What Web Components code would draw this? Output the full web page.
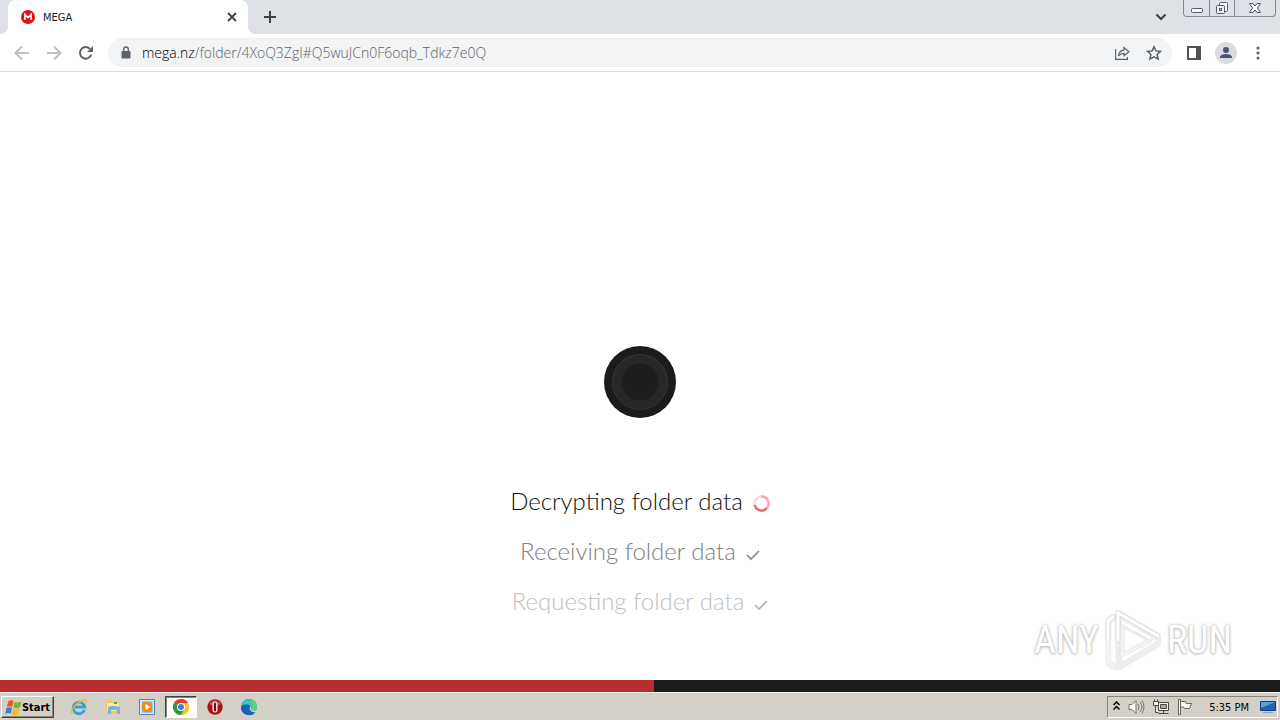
<!DOCTYPE html>
<html lang="en">
<head>
<meta charset="utf-8">
<title>MEGA</title>
<style>
  body {
    margin: 0;
    background: #fff;
    font-family: "DejaVu Sans Condensed", "DejaVu Sans", sans-serif;
    font-size: 11px;
    color: #000;
  }
</style>
</head>
<body>
<desktop-screen>
  <tab-strip slot="window">
    <browser-tab label="MEGA"></browser-tab>
  </tab-strip>
  <browser-toolbar slot="window" host="mega.nz" path="/folder/4XoQ3ZgI#Q5wuJCn0F6oqb_Tdkz7e0Q"></browser-toolbar>
  <mega-loader slot="page" progress="51.1">
    <loading-step state="busy">Decrypting folder data</loading-step>
    <loading-step state="done">Receiving folder data</loading-step>
    <loading-step state="old">Requesting folder data</loading-step>
  </mega-loader>
  <run-watermark slot="page"></run-watermark>
  <task-bar slot="taskbar" time="5:35 PM"></task-bar>
</desktop-screen>

<script>
/**
 * Base class: clones the markup of the subclass into an open shadow root
 */
class BaseElement extends HTMLElement {
  constructor() {
    super();
    const template = document.createElement("template");
    template.innerHTML = `
      <style>
        :host, * { box-sizing: border-box; }
        button {
          background: none;
          border: 0;
          margin: 0;
          padding: 0;
          color: inherit;
          font: inherit;
          display: flex;
          align-items: center;
          justify-content: center;
          flex: none;
        }
        svg { display: block; flex: none; }
      </style>
      ${this.constructor.markup}`;
    this.attachShadow({ mode: "open" }).appendChild(
      template.content.cloneNode(true)
    );
  }

  $(selector) {
    return this.shadowRoot.querySelector(selector);
  }
}

class DesktopScreen extends BaseElement {
  static markup = `
    <style>
      :host { display: flex; flex-direction: column; min-height: 100vh; }
      .page { position: relative; flex: 1; display: flex; flex-direction: column; }
    </style>
    <slot name="window"></slot>
    <div class="page"><slot name="page"></slot></div>
    <slot name="taskbar"></slot>`;
}

class TabStrip extends BaseElement {
  static markup = `
    <style>
      :host {
        display: flex;
        height: 34px;
        padding-left: 8px;
        background: #dee1e6;
        color: #3c4043;
      }
      .new { width: 28px; height: 34px; margin-left: 8px; }
      .search { width: 28px; height: 34px; margin-left: auto; margin-right: 8px; }
      .frame {
        display: flex;
        height: 17px;
        margin-right: 4px;
        border: 1px solid #84878f;
        border-top: 0;
        border-radius: 0 0 4px 4px;
      }
      .frame button { width: 25px; }
      .frame button + button { border-left: 1px solid #84878f; }
      .frame button:last-child { width: 41px; }
    </style>
    <slot></slot>
    <button class="new" aria-label="New tab">
      <svg width="14" height="14" viewBox="0 0 14 14" stroke="currentColor" stroke-width="2"><path d="M7 1v12M1 7h12"/></svg>
    </button>
    <button class="search" aria-label="Search tabs">
      <svg width="12" height="8" viewBox="0 0 12 8" fill="none" stroke="currentColor" stroke-width="2"><path d="M1.500 1.500L6 6l4.500-4.500"/></svg>
    </button>
    <div class="frame">
      <button aria-label="Minimize">
        <svg width="14" height="16" viewBox="0 0 14 16" fill="#f4f5f7" stroke="#555a66"><rect x="1.500" y="8.500" width="11" height="4" rx="1"/></svg>
      </button>
      <button aria-label="Restore">
        <svg width="14" height="16" viewBox="0 0 14 16" fill="#f4f5f7" stroke="#555a66"><rect x="4.500" y="2.500" width="8" height="9" rx="1"/><rect x="1.500" y="5.500" width="8" height="8" rx="1"/><rect x="4.500" y="8.500" width="2" height="2"/></svg>
      </button>
      <button aria-label="Close">
        <svg width="14" height="16" viewBox="0 0 14 16" fill="#f4f5f7" stroke="#555a66"><path d="M1.500 3.500h3.500l2 2.500 2-2.500h3.500L9.500 8l3 4.500H9L7 10l-2 2.500H1.500L4.500 8z"/></svg>
      </button>
    </div>`;
}

class BrowserTab extends BaseElement {
  static markup = `
    <style>
      :host {
        position: relative;
        display: flex;
        align-items: center;
        width: 240px;
        padding: 0 10px 0 13px;
        background: #fff;
        border-radius: 8px 8px 0 0;
        color: #202124;
      }
      /* Feet that flare the tab into the toolbar */
      :host::before, :host::after {
        content: "";
        position: absolute;
        bottom: 0;
        width: 8px;
        height: 8px;
      }
      :host::before { right: 100%; background: radial-gradient(circle at 0 0, transparent 8px, #fff 8px); }
      :host::after { left: 100%; background: radial-gradient(circle at 100% 0, transparent 8px, #fff 8px); }
      .label { flex: 1; margin-left: 8px; }
      button { width: 12px; height: 12px; }
    </style>
    <svg width="14" height="14" viewBox="0 0 14 14"><circle cx="7" cy="7" r="7" fill="#e3101c"/><path d="M3.900 9.800V4.500L7 7.600l3.100-3.100v5.300" fill="none" stroke="#fff" stroke-width="1.700"/></svg>
    <span class="label"></span>
    <button aria-label="Close tab">
      <svg width="10" height="10" viewBox="0 0 10 10" stroke="#3c4043" stroke-width="1.800"><path d="M1 1l8 8M9 1L1 9"/></svg>
    </button>`;

  connectedCallback() {
    this.$(".label").textContent = this.getAttribute("label");
  }
}

class BrowserToolbar extends BaseElement {
  static markup = `
    <style>
      :host {
        display: flex;
        align-items: center;
        height: 38px;
        padding: 0 6px;
        border-bottom: 1px solid #dadce0;
        background: #fff;
        color: #5f6368;
      }
      button { width: 32px; height: 32px; }
      button:disabled { color: #bdc1c6; }
      .omnibox {
        flex: 1;
        display: flex;
        align-items: center;
        height: 29px;
        margin: 0 6px;
        padding-left: 12px;
        padding-right: 2px;
        border-radius: 15px;
        background: #f1f3f4;
      }
      .url {
        flex: 1;
        margin-left: 10px;
        font: 300 14px/20px "Open Sans", sans-serif;
        color: #5f6368;
        outline: none;
        white-space: nowrap;
      }
      .host { color: #000; }
      .avatar svg { border-radius: 50%; background: #dadce0; }
    </style>
    <button disabled aria-label="Back">
      <svg width="16" height="16" viewBox="0 0 16 16" fill="none" stroke="currentColor" stroke-width="2"><path d="M15 8H2M8 1.500L1.500 8 8 14.500"/></svg>
    </button>
    <button disabled aria-label="Forward">
      <svg width="16" height="16" viewBox="0 0 16 16" fill="none" stroke="currentColor" stroke-width="2"><path d="M1 8h13M8 1.500L14.500 8 8 14.500"/></svg>
    </button>
    <button aria-label="Reload">
      <svg width="16" height="16" viewBox="0 0 16 16"><path d="M13.300 9.500A5.800 5.800 0 1 1 12.300 4.200" fill="none" stroke="currentColor" stroke-width="2"/><path d="M15 1v6H9z" fill="currentColor"/></svg>
    </button>
    <div class="omnibox">
      <svg width="12" height="14" viewBox="0 0 12 14"><rect x="1.500" y="5" width="9" height="7.500" rx="1" fill="currentColor"/><path d="M3.700 5.500V3.300a2.300 2.300 0 0 1 4.600 0v2.200" fill="none" stroke="currentColor" stroke-width="1.400"/></svg>
      <div class="url" role="textbox" contenteditable="true" spellcheck="false" aria-label="Address and search bar"><span class="host"></span><span class="path"></span></div>
      <button aria-label="Share this page">
        <svg width="16" height="16" viewBox="0 0 16 16" fill="none" stroke="currentColor" stroke-width="1.200"><path d="M1.600 4v10.400h11.800V12"/><path d="M4.500 11c.3-3.800 2.300-5.600 5.500-5.800V2.600l4.900 4.200L10 10.800V8.300C7.500 8.300 5.800 9 4.500 11z"/></svg>
      </button>
      <button aria-label="Bookmark this tab">
        <svg width="16" height="16" viewBox="0 0 16 16" fill="none" stroke="currentColor" stroke-width="1.500"><path d="M8 1.700l1.900 4.200 4.600.5-3.400 3.100 1 4.600L8 11.800l-4.100 2.300 1-4.600L1.500 6.400l4.600-.5z"/></svg>
      </button>
    </div>
    <button aria-label="Side panel">
      <svg width="14" height="14" viewBox="0 0 14 14"><path d="M1 1h12v12H1z" fill="none" stroke="#4f5358" stroke-width="2"/><path d="M9 1h5v12H9z" fill="#4f5358"/></svg>
    </button>
    <button class="avatar" aria-label="You">
      <svg width="22" height="22" viewBox="0 0 22 22" fill="#4a5777"><circle cx="11" cy="8" r="3"/><path d="M5 16v-1c0-2 3.500-3 6-3s6 1 6 3v1z"/></svg>
    </button>
    <button aria-label="Customize and control">
      <svg width="4" height="16" viewBox="0 0 4 16" fill="currentColor"><circle cx="2" cy="3" r="1.600"/><circle cx="2" cy="8" r="1.600"/><circle cx="2" cy="13" r="1.600"/></svg>
    </button>`;

  connectedCallback() {
    this.$(".host").textContent = this.getAttribute("host");
    this.$(".path").textContent = this.getAttribute("path");
  }
}

class MegaLoader extends BaseElement {
  static markup = `
    <style>
      :host {
        flex: 1;
        display: flex;
        flex-direction: column;
        align-items: center;
        justify-content: flex-end;
      }
      .disc {
        display: flex;
        padding: 8px;
        margin-bottom: 58px;
        border-radius: 50%;
        background: #1b1b1b;
      }
      .ring {
        width: 56px;
        height: 56px;
        border: 1px solid #353535;
        border-radius: 50%;
        background: radial-gradient(circle, #1d1d1d 18px, #272727 19px);
      }
      .steps { margin-bottom: 54px; }
      progress {
        appearance: none;
        display: block;
        width: 100%;
        height: 12px;
        border: 0;
      }
      progress::-webkit-progress-bar { background: #1c1c1c; }
      progress::-webkit-progress-value { background: #b92c30; }
    </style>
    <div class="disc"><div class="ring"></div></div>
    <div class="steps"><slot></slot></div>
    <progress max="100" aria-label="Loading"></progress>`;

  connectedCallback() {
    this.$("progress").value = Number(this.getAttribute("progress"));
  }
}

class LoadingStep extends BaseElement {
  static markup = `
    <style>
      :host {
        display: flex;
        align-items: center;
        justify-content: center;
        gap: 10px;
        height: 50px;
        font: 300 24px/30px Lato, sans-serif;
        color: #111;
      }
      :host([state="done"]) { color: #808080; }
      :host([state="old"]) { color: #c0c0c0; }
      svg { display: none; margin-top: 5px; }
      :host([state="busy"]) .spinner { display: block; }
      :host([state="done"]) .check { display: block; color: #888; }
      :host([state="old"]) .check { display: block; color: #b4b4b4; }
    </style>
    <slot></slot>
    <svg class="spinner" width="17" height="17" viewBox="0 0 17 17" fill="none" stroke-width="2.500">
      <circle cx="8.500" cy="8.500" r="7" stroke="#fbdcde"/>
      <path d="M8.500 1.500a7 7 0 0 1 5 12" stroke="#f6a9af"/>
      <path d="M13.500 13.500A7 7 0 0 1 1.700 10" stroke="#ee6b76"/>
    </svg>
    <svg class="check" width="14" height="14" viewBox="0 0 14 14" fill="none" stroke="currentColor" stroke-width="1.700"><path d="M1 8l4 4 8-8"/></svg>`;
}

class RunWatermark extends BaseElement {
  static markup = `
    <style>
      /* Floats over the page, anchored to its bottom right corner */
      :host {
        position: absolute;
        right: 48px;
        bottom: 22px;
        height: 60px;
        display: flex;
        align-items: center;
        gap: 6px;
        font: 38px/40px "Roboto Condensed", "Open Sans Condensed", "Liberation Sans Narrow", Roboto, sans-serif;
        color: #fff;
        text-shadow: 0 0 3px #b4b4b4, 0 1px 3px #c4c4c4;
        pointer-events: none;
      }
      path { filter: drop-shadow(0 0 1px #ccc); }
    </style>
    <span>ANY</span>
    <svg width="56" height="60" viewBox="0 0 56 60" fill="none" stroke-linejoin="round" stroke-linecap="round">
      <path d="M8 7l-5 4v42l7 5" stroke="#f2f2f2" stroke-width="4"/>
      <path d="M13 3l40 23v8L14 57z" stroke="#eee" stroke-width="4"/>
      <path d="M17 15v30l29-15z" stroke="#f4f4f4" stroke-width="3"/>
      <path d="M3 30V11l5-4M13 30V3l40 23M18 13l27 15" stroke="#fff" stroke-width="3"/>
    </svg>
    <span>RUN</span>`;
}

class TaskBar extends BaseElement {
  static markup = `
    <style>
      :host {
        display: flex;
        align-items: center;
        height: 28px;
        padding: 1px 2px 0 1px;
        border-top: 1px solid #f6f5f1;
        background: #d4d0c8;
      }
      .start {
        width: 53px;
        height: 22px;
        margin-right: 9px;
        border: 1px solid;
        border-color: #fff #404040 #404040 #fff;
        box-shadow: inset -1px -1px #87847c;
        font-weight: bold;
        font-size: 11px;
      }
      .app { width: 32px; height: 22px; margin-right: 2px; }
      .app.active {
        border: 1px solid;
        border-color: #404040 #fff #fff #404040;
        box-shadow: inset 1px 1px #87847c;
        background: #fff;
      }
      .tray {
        display: flex;
        align-items: center;
        gap: 8px;
        height: 22px;
        margin-left: auto;
        padding: 0 1px 0 5px;
        border: 1px solid;
        border-color: #87847c #fff #fff #87847c;
      }
      time { margin: 0 3px 0 8px; }
    </style>
    <button class="start">
      <svg width="17" height="17" viewBox="0 0 16 16">
        <path d="M3 2c2-1.300 3.500-1.200 5 0L6.800 7.500c-1.700-1-3.200-1-5 0z" fill="#ea5a24"/>
        <path d="M9 2.500c1.800 1.100 3.600 1 6.500 0L14 8c-2.200 1-4 1-6 0z" fill="#76b82a"/>
        <path d="M1.500 8.500c1.700-1 3.300-1 5 0L5.300 14c-1.700-1.200-3.200-1.100-5 0z" fill="#3182cf"/>
        <path d="M7.500 9c1.900 1.100 3.800 1 6 0l-1.200 5.500c-2.200 1.100-4 1.100-6 0z" fill="#f8bc18"/>
      </svg>Start
    </button>
    <button class="app" aria-label="Internet Explorer">
      <svg width="18" height="18" viewBox="0 0 18 18" fill="none"><path d="M14.500 12a5.800 5.800 0 1 1 .3-3H5" stroke="#35a1dc" stroke-width="2.800"/><path d="M2.500 15.500C-1 14 5 5.500 12 2.500c3.500-1.500 5-.5 3.800 2.500" stroke="#e5b832" stroke-width="1.400"/></svg>
    </button>
    <button class="app" aria-label="Windows Explorer">
      <svg width="18" height="18" viewBox="0 0 18 18"><path d="M2 3l5-1 1 1.500 8 .5v11H2z" fill="#e8c85e"/><path d="M3 5h12v8H3z" fill="#fbeaa5"/><path d="M10 4h3v2h-3z" fill="#59a94a"/><path d="M4 9c3-1.500 8-1.500 12 0v7h-3v-4H7v4H4z" fill="#76b5dd"/></svg>
    </button>
    <button class="app" aria-label="Windows Media Player">
      <svg width="16" height="16" viewBox="0 0 16 16"><path d="M.5.5h15v15H.5z" fill="#d9eaf7" stroke="#4989bd"/><path d="M3 2.500h10.500v11H3z" fill="#78b2dc"/><circle cx="8" cy="8" r="5.500" fill="#f58a1c"/><path d="M6.500 5l5 3-5 3z" fill="#fff"/></svg>
    </button>
    <button class="app active" aria-label="Google Chrome">
      <svg width="16" height="16" viewBox="0 0 16 16"><circle cx="8" cy="8" r="8" fill="#fbc116"/><path d="M8 8L1.070 4A8 8 0 0 1 14.930 4z" fill="#e33b2e"/><path d="M8 8L1.070 4A8 8 0 0 0 8 16l3.500-6z" fill="#279847"/><path d="M8 4h6.930A8 8 0 0 1 8 16l3.500-6z" fill="#fbc116"/><circle cx="8" cy="8" r="4" fill="#fff"/><circle cx="8" cy="8" r="3" fill="#3d7de5"/></svg>
    </button>
    <button class="app" aria-label="Opera">
      <svg width="16" height="16" viewBox="0 0 16 16"><circle cx="8" cy="8" r="7.700" fill="#a81315"/><path d="M2 5a7 7 0 0 1 12 0L8 8z" fill="#d44a48"/><rect x="5.500" y="2.500" width="5" height="11" rx="2.500" fill="#f5dedc"/><rect x="7" y="3.500" width="2" height="9" rx="1" fill="#7d0c0e"/></svg>
    </button>
    <button class="app" aria-label="Microsoft Edge">
      <svg width="18" height="18" viewBox="0 0 18 18"><circle cx="9" cy="9" r="8" fill="#157dcd"/><path d="M1 9a8 8 0 0 1 16 0c0 3-3 4-6 3 1-3-1-5-4-5-3 0-5 1-6 2z" fill="#3bc6c2"/><path d="M13 2a8 8 0 0 1 4 7c0 3-3 4-6 3 2-3 2-6-1-8z" fill="#62d273"/><path d="M1 9c1-3 9-4 9 0-2 0-2 4 2 5 2 .5 3 0 4-1A8 8 0 0 1 1 9z" fill="#1762b5"/><path d="M10 8.500c2 1 .5 2.500 1.500 3.500 1.500 1 4 .5 5.500-.5l1 2c-5 2-9 0-8-5z" fill="#d4d0c8"/></svg>
    </button>
    <div class="tray">
      <button aria-label="Show hidden icons">
        <svg width="7" height="12" viewBox="0 0 7 12" fill="none" stroke="#000" stroke-width="1.500"><path d="M.5 4l3-3 3 3M.5 8.500l3-3 3 3"/></svg>
      </button>
      <button aria-label="Volume">
        <svg width="17" height="16" viewBox="0 0 17 16" fill="none" stroke="#77746e"><path d="M1 5.500h3l4-4v13l-4-4H1z" fill="#f8f8f6"/><path d="M10 5q2 3 0 6M12 3q4 5 0 10M14 1.500q4 6.500 0 13"/></svg>
      </button>
      <button aria-label="Network">
        <svg width="16" height="16" viewBox="0 0 16 16" fill="#f3f2ee" stroke="#4d4b47"><path d="M5.500 3.500h10v8h-10zM5.500 14.500h10M10.500 11.500v3"/><path d="M7.500 5.500h6v4h-6z" fill="#aaa8a2"/><path d="M.5 2.500h5v4h-5zM1.500.5v2M4.500.5v2M2.500 6.500v7h3"/></svg>
      </button>
      <button aria-label="Action Center">
        <svg width="16" height="16" viewBox="0 0 16 16" fill="#fafaf8" stroke="#66635d"><path d="M1.500.5h2v15h-2z"/><path d="M3.500 2.500h5l1 2h5l-2 5h-5l-1-1.500h-3z"/></svg>
      </button>
      <time></time>
      <button aria-label="Show desktop">
        <svg width="16" height="14" viewBox="0 0 16 14"><path d="M.5 1.500h15v9H.5z" fill="#2463b5" stroke="#164377"/><path d="M1 2h14L1 8z" fill="#5d9ee0"/><path d="M3 12h10v1H3z" fill="#77a7d5"/></svg>
      </button>
    </div>`;

  connectedCallback() {
    this.$("time").textContent = this.getAttribute("time");
  }
}

customElements.define("desktop-screen", DesktopScreen);
customElements.define("tab-strip", TabStrip);
customElements.define("browser-tab", BrowserTab);
customElements.define("browser-toolbar", BrowserToolbar);
customElements.define("mega-loader", MegaLoader);
customElements.define("loading-step", LoadingStep);
customElements.define("run-watermark", RunWatermark);
customElements.define("task-bar", TaskBar);
</script>
</body>
</html>
